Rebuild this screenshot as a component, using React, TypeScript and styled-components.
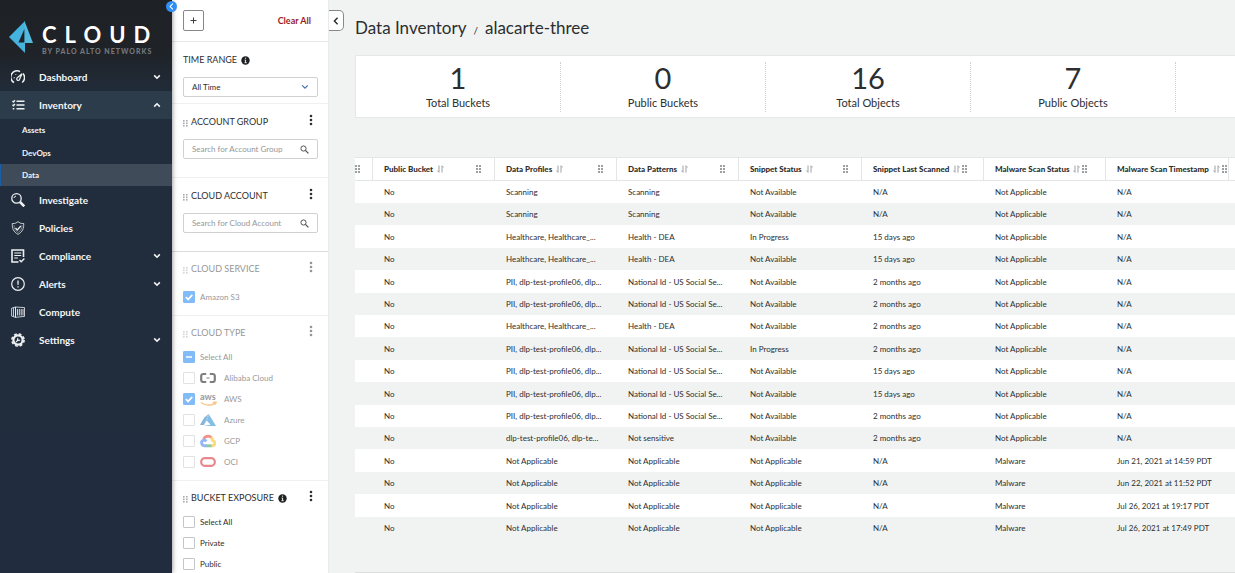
import React from "react";
import styled, { createGlobalStyle, css } from "styled-components";

const Global = createGlobalStyle`
  *, *::before, *::after { box-sizing: border-box; }
  html, body { margin: 0; height: 100%; overflow: hidden; }
  body { font-family: Lato, "Liberation Sans", sans-serif; background: #f1f3f3; color: #2c2e2f; }
  #root { height: 100%; }
  button, input, select { font-family: inherit; color: inherit; margin: 0; }
  button { background: none; border: 0; padding: 0; cursor: pointer; }
  h1, h2, p, ul, dl, dd, dt { margin: 0; padding: 0; }
  ul { list-style: none; }
  svg { display: block; flex: none; }
`;

const Page = styled.div`
  display: flex;
  height: 100vh;
`;

/* ---------- Sidebar ---------- */

const Sidebar = styled.nav`
  position: relative;
  z-index: 2;
  flex: 0 0 172px;
  background: linear-gradient(#1e2126 0, #1f2226 48px, #212d3c 98px, #212d3e 100%);
  box-shadow: 0 0 5px rgba(0, 0, 0, 0.5);
  color: #fff;
`;

const CollapseDot = styled.button`
  position: absolute;
  top: 1px;
  right: -5px;
  width: 11px;
  height: 11px;
  border-radius: 50%;
  background: #2f8ff5;
  color: #fff;
  display: grid;
  place-items: center;
`;

const Brand = styled.div`
  display: flex;
  align-items: flex-start;
  gap: 8px;
  height: 63px;
  padding: 21px 0 0 9px;
`;

const BrandText = styled.div`
  padding-top: 2px;
`;

const BrandName = styled.div`
  font: 700 22px/24px Lato, sans-serif;
  letter-spacing: 8px;
`;

const BrandBy = styled.div`
  font: 900 7px/8px Lato, sans-serif;
  letter-spacing: 1px;
  color: #75787c;
  white-space: nowrap;
`;

const NavButton = styled.button<{ $open?: boolean }>`
  display: flex;
  align-items: center;
  width: 100%;
  height: 28px;
  padding: 0 11px;
  font-size: 10px;
  font-weight: 700;
  color: #f4f6f7;
  background: ${(p) => (p.$open ? "#2d3c4a" : "transparent")};
`;

const NavLabel = styled.span`
  flex: 1;
  margin-left: 14px;
  text-align: left;
`;

const SubItem = styled.li`
  display: flex;
  height: 22px;
  &:nth-child(2) { height: 23px; }
`;

const SubLink = styled.a<{ $active?: boolean }>`
  flex: 1;
  display: flex;
  align-items: center;
  padding-left: 21px;
  border-left: 1px solid ${(p) => (p.$active ? "#1b5fa8" : "transparent")};
  font-size: 8px;
  font-weight: 700;
  color: #f0f2f3;
  text-decoration: none;
  background: ${(p) => (p.$active ? "#3f4b59" : "transparent")};
`;

/* ---------- Filter panel ---------- */

const Filters = styled.aside`
  position: relative;
  z-index: 1;
  flex: 0 0 157px;
  min-width: 0;
  background: #fff;
  border-right: 1px solid #e9eaea;
`;

const FilterTools = styled.div`
  display: flex;
  align-items: center;
  justify-content: space-between;
  height: 42px;
  padding: 0 17px 0 11px;
  border-bottom: 1px solid #e6e7e7;
`;

const AddButton = styled.button`
  display: grid;
  place-items: center;
  width: 21px;
  height: 21px;
  border: 1px solid #85888b;
  border-radius: 2px;
`;

const ClearButton = styled.button`
  font-size: 9px;
  font-weight: 700;
  color: #981c28;
`;

const PanelToggle = styled.button`
  position: absolute;
  top: 10px;
  left: 157px;
  width: 15px;
  height: 21px;
  display: grid;
  place-items: center;
  background: #fff;
  border: 1px solid #85888b;
  border-left: 0;
  border-radius: 0 5px 5px 0;
`;

const Section = styled.section<{ $h?: number; $roomy?: boolean; $dim?: boolean; $strong?: boolean }>`
  height: ${(p) => (p.$h ? p.$h + "px" : "auto")};
  padding: ${(p) => (p.$roomy ? 10 : 9)}px 10px 0 11px;
  border-bottom: 1px solid ${(p) => (p.$strong ? "#dadcdc" : "#eff0f0")};
  ${(p) => p.$dim && css`
    & > * { opacity: 0.5; }
  `}
`;

const SectionHead = styled.div`
  display: flex;
  align-items: center;
  height: 16px;
`;

const SectionTitle = styled.h2`
  font-size: 9px;
  line-height: 16px;
  font-weight: 400;
  margin-right: 4px;
`;

const Grip = styled.span`
  display: inline-flex;
  width: 8px;
  flex: none;
  padding-top: 2px;
  color: #a9acae;
`;

const MoreButton = styled.button`
  align-self: flex-start;
  margin-left: auto;
  width: 14px;
  height: 12px;
  display: grid;
  place-items: center;
`;

const Field = styled.label`
  display: flex;
  align-items: center;
  height: 20px;
  margin: 9px 0 0;
  padding: 0 8px;
  border: 1px solid #cfd1d3;
  border-radius: 2px;
`;

const fieldText = css`
  flex: 1;
  width: 100%;
  min-width: 0;
  height: 18px;
  border: 0;
  padding: 0;
  outline: 0;
  background: none;
`;

const SearchInput = styled.input`
  ${fieldText}
  font-size: 8px;
  &::placeholder { color: #94979a; opacity: 1; }
`;

const Select = styled.select`
  ${fieldText}
  font-size: 8px;
  appearance: none;
`;

const SelectArrow = styled.span`
  color: #3f73b0;
`;

const CheckList = styled.div<{ $gap: number }>`
  display: flex;
  flex-direction: column;
  padding-top: ${(p) => p.$gap}px;
`;

const CheckRow = styled.label`
  display: flex;
  align-items: center;
  height: 21px;
  font-size: 8px;
`;

const Box = styled.input`
  appearance: none;
  flex: none;
  width: 12px;
  height: 12px;
  border: 1px solid #c4c7c9;
  border-radius: 1px;
  background: #fff;
`;

const BoxWrap = styled.span<{ $on?: boolean }>`
  position: relative;
  display: flex;
  margin-right: 5px;
  svg { position: absolute; left: 0; top: 0; pointer-events: none; }
  ${(p) => p.$on && css`
    ${Box} { background: #0679f2; border-color: #0679f2; }
  `}
`;

const LogoSlot = styled.span`
  width: 24px;
  flex: none;
`;

/* ---------- Main ---------- */

const Main = styled.main`
  flex: 1;
  min-width: 0;
  overflow: hidden;
  padding: 16px 0 0 26px;
`;

const Title = styled.h1`
  display: flex;
  align-items: baseline;
  gap: 7px;
  height: 24px;
  font-size: 17px;
  line-height: 24px;
  font-weight: 400;
`;

const Slash = styled.span`
  font-size: 10px;
  line-height: 12px;
`;

const Stats = styled.dl`
  display: flex;
  height: 63px;
  margin-top: 15px;
  padding: 6px 0 5px;
  background: #fff;
  border: 1px solid #e6e8e8;
  border-right: 0;
`;

const Stat = styled.div`
  display: flex;
  flex-direction: column-reverse;
  justify-content: flex-end;
  flex: 0 0 205px;
  text-align: center;
  border-right: 1px dotted #cfd1d1;
`;

const StatValue = styled.dd`
  font-size: 29px;
  line-height: 32px;
`;

const StatLabel = styled.dt`
  font-size: 11px;
  line-height: 18px;
`;

const TableArea = styled.div`
  margin-top: 39px;
  overflow: hidden;
  padding-bottom: 33px;
  border-bottom: 1px solid #dcdede;
`;

const Table = styled.table`
  table-layout: fixed;
  width: 996px;
  border-collapse: separate;
  border-spacing: 0;
  font-size: 8px;
`;

const Col = styled.col<{ $w: number }>`
  width: ${(p) => p.$w}px;
`;

const Th = styled.th`
  height: 24px;
  padding: 0 0 0 11px;
  border: solid #e4e6e6;
  border-width: 1px 1px 1px 0;
  background: #fff;
  text-align: left;
  font-weight: 900;
  overflow: hidden;
  white-space: nowrap;
  &:first-child { padding: 0; }
`;

const ThInner = styled.div`
  display: flex;
  align-items: center;
  gap: 4px;
`;

const ThTools = styled.span<{ $tight?: boolean }>`
  display: inline-flex;
  flex: ${(p) => (p.$tight ? "none" : "1")};
  justify-content: space-between;
  gap: 2px;
  padding-right: ${(p) => (p.$tight ? 0 : 12)}px;
  color: #9da0a2;
`;

const Tr = styled.tr`
  height: 22px;
  background: #fff;
  &:nth-child(even) { background: #f1f3f3; }
  &:nth-child(5n + 3), &:nth-child(5n) { height: 23px; }
`;

const Td = styled.td`
  padding: 0 0 0 11px;
  white-space: nowrap;
`;

/* ---------- Icons ---------- */

const Chevron = ({ dir, size = 8, w = 2 }: { dir: "up" | "down" | "left"; size?: number; w?: number }) => (
  <svg width={size} height={size} viewBox="0 0 10 10" fill="none" stroke="currentColor" strokeWidth={w}>
    <path d={dir === "up" ? "M1.5 7 5 3.5 8.5 7" : dir === "down" ? "M1.5 3 5 6.5 8.5 3" : "M7 1 3 5l4 4"} />
  </svg>
);

const Dots = ({ size = 7 }: { size?: number }) => (
  <svg width={size === 7 ? 5 : 6} height={size} viewBox={`0 0 ${size === 7 ? 5 : 6} ${size}`} fill="currentColor">
    {[0, 1, 2].map((r) =>
      [0, 3].map((x) => <rect key={`${x}-${r}`} x={x} y={r * (size === 7 ? 2.5 : 3)} width={size === 7 ? 1.6 : 2} height={size === 7 ? 1.6 : 2} />)
    )}
  </svg>
);

const Sort = () => (
  <svg width="7" height="8" viewBox="0 0 7 8" fill="none" stroke="currentColor" strokeWidth="1">
    <path d="M2 .5v6.8M.3 5.5 2 7.3M5 7.6V.8M6.7 2.5 5 .7" />
  </svg>
);

const More = () => (
  <svg width="4" height="12" viewBox="0 0 4 12" fill="currentColor">
    <circle cx="2" cy="2" r="1.3" />
    <circle cx="2" cy="6" r="1.3" />
    <circle cx="2" cy="10" r="1.3" />
  </svg>
);

const Info = () => (
  <svg width="9" height="9" viewBox="0 0 9 9">
    <circle cx="4.5" cy="4.5" r="4.2" fill="#1f2123" />
    <path d="M4.6 1.6v1.2M3.6 4h1v2.7M3.5 6.7h2.2" stroke="#fff" strokeWidth=".9" fill="none" />
  </svg>
);

const Magnifier = () => (
  <svg width="9" height="9" viewBox="0 0 9 9" fill="none" stroke="#505356">
    <circle cx="3.5" cy="3.5" r="2.6" strokeWidth="1" />
    <path d="m5.4 5.4 3 3" strokeWidth="1.3" />
  </svg>
);

const Check = () => (
  <svg width="12" height="12" viewBox="0 0 12 12" fill="none" stroke="#fff" strokeWidth="1.7">
    <path d="m2.8 6 2.3 2.4 4.2-4.5" />
  </svg>
);

const Minus = () => (
  <svg width="12" height="12" viewBox="0 0 12 12" stroke="#fff" strokeWidth="1.5">
    <path d="M3 6h6" />
  </svg>
);

const BrandMark = () => (
  <svg width="25" height="32" viewBox="0 0 25 32">
    <path d="M16 0v32L0 16z" fill="#45b3dd" />
    <path d="M15.5 0 24 22h-8.500z" fill="#52badf" />
    <path d="M15.4 8v13.500H9.500z" fill="#1f2328" />
  </svg>
);

const navIcons: Record<string, React.ReactNode> = {
  Dashboard: (
    <>
      <path d="M3 12.5A6.2 6.2 0 0 1 9 1.6M12 3.5a6.2 6.2 0 0 1-.8 9" strokeWidth="1.5" />
      <path d="m11 3.7-4.7 4A1.5 1.5 0 1 0 8.4 9.8z" strokeWidth="1.2" />
      <path d="M2.6 7.8h1.2M4.3 4l.8.8" />
    </>
  ),
  Inventory: <path d="M5.5 3.2h8M5.5 7h8M5.5 10.8h8M1.5 3l.9.9L4 2.3M1.5 6.8l.9.9L4 6.1M1.7 10.8h1.6" strokeWidth="1.4" />,
  Investigate: (
    <>
      <circle cx="5.5" cy="5.4" r="4.7" strokeWidth="1.3" />
      <path d="M3 5a2.5 2.5 0 0 1 2-2" />
      <path d="m9 9 4.3 4.3" strokeWidth="2.6" />
    </>
  ),
  Policies: (
    <>
      <path d="M7 .6 9 2c1 .5 2 .6 3.7.5.2 4.8-1 8.3-5.7 10.9C2.3 10.8 1.1 7.3 1.3 2.5 3 2.6 4 2.5 5 2z" strokeWidth=".8" />
      <path d="m4.5 7 1.8 2 3.5-4" strokeWidth="1.2" />
      <path d="M3 4c0 3.5 1 5.5 4 7.6 3-2 4-4 4-7.6" strokeWidth=".4" />
    </>
  ),
  Compliance: (
    <>
      <path d="M7.5 13H1V1h11.5v7" strokeWidth="1.6" />
      <path d="M3.3 4h6.9M3.3 6.5h6.9M3.3 9h3.5" strokeWidth="1.2" />
      <path d="m8.5 11 1.7 1.8 3.2-3.3" strokeWidth="1.4" />
    </>
  ),
  Alerts: (
    <>
      <circle cx="7" cy="7" r="6.3" strokeWidth="1.2" />
      <path d="M7 3.5v4.3M7 9.2v1.4" strokeWidth="1.3" />
    </>
  ),
  Compute: (
    <>
      <path d="m4.5 2 9 .6v8.8l-9 .9zM.6 3.2 4.5 2v10.3L.6 11zM2.5 2.7v8.9" strokeWidth=".8" />
      <path d="M6.4 4v6.5M8.3 4v6.5M10.2 4v6.5M12 4v6.5" strokeWidth=".9" />
    </>
  ),
  Settings: (
    <>
      <circle cx="7" cy="7" r="4.6" strokeWidth="2.2" />
      <circle cx="7" cy="7" r="6.1" strokeWidth="1.6" strokeDasharray="2.8 1.99" />
      <path d="M5 9l2.5-2.5M7.2 5.2a1.2 1.2 0 1 0 1.6 1.6" strokeWidth="1.1" />
    </>
  ),
};

const NavIcon = ({ name }: { name: string }) => (
  <svg width="14" height="14" viewBox="0 0 14 14" fill="none" stroke="#eef1f2">{navIcons[name]}</svg>
);

const cloudLogos: Record<string, React.ReactNode> = {
  "Alibaba Cloud": (
    <svg width="16" height="12" viewBox="0 0 16 12" fill="none" stroke="#000" strokeWidth="2.2">
      <path d="M6.2 2H3.3A2 2 0 0 0 1.2 4v4a2 2 0 0 0 2.1 2h2.9M9.8 2h2.9A2 2 0 0 1 14.8 4v4a2 2 0 0 1-2.1 2H9.8" />
      <path d="M6.5 6h3" strokeWidth="1" />
    </svg>
  ),
  AWS: (
    <svg width="20" height="16" viewBox="0 -2 20 16" fill="none">
      <text x="0" y="7" fontSize="9" fontWeight="900" fill="#3c4754">aws</text>
      <path d="M1 9.5c4.5 3.2 10 3.2 14 .8M12.8 9.5l3.2-.3-.8 2.6" stroke="#f5921b" strokeWidth="1.5" />
    </svg>
  ),
  Azure: (
    <svg width="16" height="12" viewBox="0 0 16 12">
      <path d="M8.6 0 4.2 3.8 0 11h3.8z" fill="#0a6db8" />
      <path d="m9 .6 7 11.4H3.5l7-1.2L6.8 6.5z" fill="#0a7fd0" />
      <path d="M8.6 0 3.8 11l3-4.5L9 .6z" fill="#0a7fd0" />
    </svg>
  ),
  GCP: (
    <svg width="16" height="14" viewBox="0 0 16 14" fill="none" strokeWidth="2.9">
      <path d="M3.6 5A4.7 4.7 0 0 1 11.5 3.8" stroke="#e0281c" />
      <path d="M11 3.5a4.5 4.5 0 0 1 1.7 3.2 2.6 2.6 0 0 1 .3 5H11" stroke="#f9b800" />
      <path d="M11.5 11.8H6" stroke="#209644" />
      <path d="M6.5 11.8H4.3A3 3 0 0 1 3.6 6c1 0 2 .4 2.8 1.3" stroke="#2d70f0" />
    </svg>
  ),
  OCI: (
    <svg width="16" height="10" viewBox="0 0 16 10" fill="none">
      <rect x="1.2" y="1.2" width="13.6" height="7.6" rx="3.6" stroke="#d3131c" strokeWidth="2.2" />
    </svg>
  ),
};

/* ---------- Data ---------- */

const nav: { label: string; chevron?: "up" | "down"; children?: string[] }[] = [
  { label: "Dashboard", chevron: "down" },
  { label: "Inventory", chevron: "up", children: ["Assets", "DevOps", "Data"] },
  { label: "Investigate" },
  { label: "Policies" },
  { label: "Compliance", chevron: "down" },
  { label: "Alerts", chevron: "down" },
  { label: "Compute" },
  { label: "Settings", chevron: "down" },
];

const stats = [["1", "Total Buckets"], ["0", "Public Buckets"], ["16", "Total Objects"], ["7", "Public Objects"]];

const columns: { label: string; width: number; tight?: boolean }[] = [
  { label: "", width: 18 },
  { label: "Public Bucket", width: 122 },
  { label: "Data Profiles", width: 122 },
  { label: "Data Patterns", width: 122 },
  { label: "Snippet Status", width: 123 },
  { label: "Snippet Last Scanned", width: 122, tight: true },
  { label: "Malware Scan Status", width: 122, tight: true },
  { label: "Malware Scan Timestamp", width: 123, tight: true },
  { label: "", width: 122 },
];

const HC = "Healthcare, Healthcare_...";
const PII = "PII, dlp-test-profile06, dlp...";
const NID = "National Id - US Social Se...";
const NA = "Not Applicable";
const NV = "Not Available";
const rows = [
  ["Scanning", "Scanning", NV, "N/A", NA, "N/A"],
  ["Scanning", "Scanning", NV, "N/A", NA, "N/A"],
  [HC, "Health - DEA", "In Progress", "15 days ago", NA, "N/A"],
  [HC, "Health - DEA", NV, "15 days ago", NA, "N/A"],
  [PII, NID, NV, "2 months ago", NA, "N/A"],
  [PII, NID, NV, "2 months ago", NA, "N/A"],
  [HC, "Health - DEA", NV, "2 months ago", NA, "N/A"],
  [PII, NID, "In Progress", "2 months ago", NA, "N/A"],
  [PII, NID, NV, "15 days ago", NA, "N/A"],
  [PII, NID, NV, "15 days ago", NA, "N/A"],
  [PII, NID, NV, "2 months ago", NA, "N/A"],
  ["dlp-test-profile06, dlp-te...", "Not sensitive", NV, "2 months ago", NA, "N/A"],
  [NA, NA, NA, "N/A", "Malware", "Jun 21, 2021 at 14:59 PDT"],
  [NA, NA, NA, "N/A", "Malware", "Jun 22, 2021 at 11:52 PDT"],
  [NA, NA, NA, "N/A", "Malware", "Jul 26, 2021 at 19:17 PDT"],
  [NA, NA, NA, "N/A", "Malware", "Jul 26, 2021 at 17:49 PDT"],
];

const Option = ({ label, state, logo }: { label: string; state?: "on" | "mixed"; logo?: boolean }) => (
  <CheckRow>
    <BoxWrap $on={!!state}>
      <Box type="checkbox" defaultChecked={state === "on"} />
      {state === "on" && <Check />}
      {state === "mixed" && <Minus />}
    </BoxWrap>
    {logo && <LogoSlot>{cloudLogos[label]}</LogoSlot>}
    {label}
  </CheckRow>
);

const Head = ({ title, info }: { title: string; info?: boolean }) => (
  <SectionHead>
    <Grip><Dots /></Grip>
    <SectionTitle>{title}</SectionTitle>
    {info && <Info />}
    <MoreButton aria-label={`${title} options`}><More /></MoreButton>
  </SectionHead>
);

export default function App() {
  return (
    <Page>
      <Global />
      <Sidebar>
        <CollapseDot aria-label="Collapse navigation"><Chevron dir="left" size={7} w={1.5} /></CollapseDot>
        <Brand>
          <BrandMark />
          <BrandText>
            <BrandName>CLOUD</BrandName>
            <BrandBy>BY PALO ALTO NETWORKS</BrandBy>
          </BrandText>
        </Brand>
        {nav.map((n) => (
          <React.Fragment key={n.label}>
            <NavButton $open={n.chevron === "up"}>
              <NavIcon name={n.label} />
              <NavLabel>{n.label}</NavLabel>
              {n.chevron && <Chevron dir={n.chevron} />}
            </NavButton>
            {n.children && (
              <ul>
                {n.children.map((c) => (
                  <SubItem key={c}><SubLink href="#" $active={c === "Data"}>{c}</SubLink></SubItem>
                ))}
              </ul>
            )}
          </React.Fragment>
        ))}
      </Sidebar>

      <Filters>
        <PanelToggle aria-label="Hide filters"><Chevron dir="left" size={8} w={1.8} /></PanelToggle>
        <FilterTools>
          <AddButton aria-label="Add filter">
            <svg width="7" height="7" viewBox="0 0 7 7" stroke="#3a3d40"><path d="M3.5 .5v6M.5 3.5h6" /></svg>
          </AddButton>
          <ClearButton>Clear All</ClearButton>
        </FilterTools>
        <Section $h={62} $roomy>
          <SectionHead>
            <SectionTitle>TIME RANGE</SectionTitle>
            <Info />
          </SectionHead>
          <Field>
            <Select aria-label="Time range"><option>All Time</option></Select>
            <SelectArrow><Chevron dir="down" w={1.5} /></SelectArrow>
          </Field>
        </Section>
        <Section $h={74} $roomy>
          <Head title="ACCOUNT GROUP" />
          <Field><SearchInput aria-label="Account group" placeholder="Search for Account Group" /><Magnifier /></Field>
        </Section>
        <Section $h={74} $roomy $strong>
          <Head title="CLOUD ACCOUNT" />
          <Field><SearchInput aria-label="Cloud account" placeholder="Search for Cloud Account" /><Magnifier /></Field>
        </Section>
        <Section $h={64} $dim>
          <Head title="CLOUD SERVICE" />
          <CheckList $gap={9}><Option label="Amazon S3" state="on" /></CheckList>
        </Section>
        <Section $h={165} $dim>
          <Head title="CLOUD TYPE" />
          <CheckList $gap={5}>
            <Option label="Select All" state="mixed" />
            <Option label="Alibaba Cloud" logo />
            <Option label="AWS" state="on" logo />
            <Option label="Azure" logo />
            <Option label="GCP" logo />
            <Option label="OCI" logo />
          </CheckList>
        </Section>
        <Section>
          <Head title="BUCKET EXPOSURE" info />
          <CheckList $gap={5}>
            <Option label="Select All" />
            <Option label="Private" />
            <Option label="Public" />
          </CheckList>
        </Section>
      </Filters>

      <Main>
        <Title>Data Inventory <Slash>/</Slash> alacarte-three</Title>
        <Stats>
          {stats.map(([v, l]) => (
            <Stat key={l}><StatLabel>{l}</StatLabel><StatValue>{v}</StatValue></Stat>
          ))}
        </Stats>
        <TableArea>
          <Table>
            <colgroup>{columns.map((c, i) => <Col key={i} $w={c.width} />)}</colgroup>
            <thead>
              <tr>
                {columns.map((c, i) => (
                  <Th key={i}>
                    <ThInner>
                      {c.label}
                      {c.label && <ThTools $tight={c.tight}><Sort /><Dots size={8} /></ThTools>}
                      {i === 0 && <ThTools $tight><Dots size={8} /></ThTools>}
                    </ThInner>
                  </Th>
                ))}
              </tr>
            </thead>
            <tbody>
              {rows.map((r, i) => (
                <Tr key={i}>
                  <Td />
                  <Td>No</Td>
                  {r.map((v, j) => <Td key={j}>{v}</Td>)}
                  <Td />
                </Tr>
              ))}
            </tbody>
          </Table>
        </TableArea>
      </Main>
    </Page>
  );
}
